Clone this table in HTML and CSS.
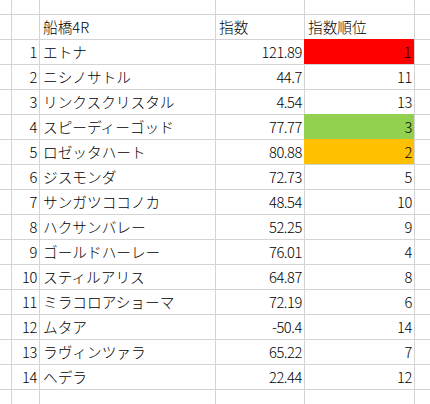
FILE: index.html
```html
<!DOCTYPE html>
<html lang="ja">
<head>
<meta charset="utf-8">
<link rel="stylesheet" href="styles.css">
</head>
<body>
<div class="sheet">
  <div class="c c-a r-top"></div><div class="c r-top"></div><div class="c r-top"></div><div class="c r-top"></div><div class="c r-top"></div><div class="c r-top"></div>

  <div class="c c-a"></div><div class="c"></div><div class="c txt">船橋4R</div><div class="c txt">指数</div><div class="c txt">指数順位</div><div class="c"></div>

  <div class="c c-a"></div><div class="c num">1</div><div class="c txt">エトナ</div><div class="c num">121.89</div><div class="c num fill-red">1</div><div class="c"></div>
  <div class="c c-a"></div><div class="c num">2</div><div class="c txt">ニシノサトル</div><div class="c num">44.7</div><div class="c num">11</div><div class="c"></div>
  <div class="c c-a"></div><div class="c num">3</div><div class="c txt">リンクスクリスタル</div><div class="c num">4.54</div><div class="c num">13</div><div class="c"></div>
  <div class="c c-a"></div><div class="c num">4</div><div class="c txt">スピーディーゴッド</div><div class="c num">77.77</div><div class="c num fill-green">3</div><div class="c"></div>
  <div class="c c-a"></div><div class="c num">5</div><div class="c txt">ロゼッタハート</div><div class="c num">80.88</div><div class="c num fill-orange">2</div><div class="c"></div>
  <div class="c c-a"></div><div class="c num">6</div><div class="c txt">ジスモンダ</div><div class="c num">72.73</div><div class="c num">5</div><div class="c"></div>
  <div class="c c-a"></div><div class="c num">7</div><div class="c txt">サンガツココノカ</div><div class="c num">48.54</div><div class="c num">10</div><div class="c"></div>
  <div class="c c-a"></div><div class="c num">8</div><div class="c txt">ハクサンバレー</div><div class="c num">52.25</div><div class="c num">9</div><div class="c"></div>
  <div class="c c-a"></div><div class="c num">9</div><div class="c txt">ゴールドハーレー</div><div class="c num">76.01</div><div class="c num">4</div><div class="c"></div>
  <div class="c c-a"></div><div class="c num">10</div><div class="c txt">スティルアリス</div><div class="c num">64.87</div><div class="c num">8</div><div class="c"></div>
  <div class="c c-a"></div><div class="c num">11</div><div class="c txt">ミラコロアショーマ</div><div class="c num">72.19</div><div class="c num">6</div><div class="c"></div>
  <div class="c c-a"></div><div class="c num">12</div><div class="c txt">ムタア</div><div class="c num">-50.4</div><div class="c num">14</div><div class="c"></div>
  <div class="c c-a"></div><div class="c num">13</div><div class="c txt">ラヴィンツァラ</div><div class="c num">65.22</div><div class="c num">7</div><div class="c"></div>
  <div class="c c-a"></div><div class="c num">14</div><div class="c txt">ヘデラ</div><div class="c num">22.44</div><div class="c num">12</div><div class="c"></div>

  <div class="c c-a"></div><div class="c"></div><div class="c"></div><div class="c"></div><div class="c"></div><div class="c"></div>
</div>
</body>
</html>
```

FILE: styles.css
```css
html, body {
  margin: 0;
  padding: 0;
  background: #ffffff;
}

.sheet {
  display: grid;
  grid-template-columns: 11px 28px 176px 89px 110px 16px;
  grid-template-rows: 14px;
  grid-auto-rows: 25px;
  width: 430px;
  height: 404px;
  overflow: hidden;
  font-family: "Noto Sans CJK JP", "Noto Sans", sans-serif;
  font-size: 14.67px;
  font-weight: 300;
  color: #000000;
}

.c {
  box-sizing: border-box;
  border-left: 1px solid #d4d4d4;
  border-top: 1px solid #d4d4d4;
  line-height: 24px;
  white-space: nowrap;
  overflow: hidden;
}

.c-a {
  border-left: none;
}

.r-top {
  border-top: none;
}

.txt {
  text-align: left;
  padding-left: 3px;
}

.num {
  text-align: right;
  padding-right: 2px;
  letter-spacing: -0.4px;
}

.fill-red {
  background: #ff0000;
  border-color: transparent;
  padding-right: 3px;
}

.fill-green {
  background: #92d050;
  border-color: transparent;
}

.fill-orange {
  background: #ffc000;
  border-color: transparent;
}
```
